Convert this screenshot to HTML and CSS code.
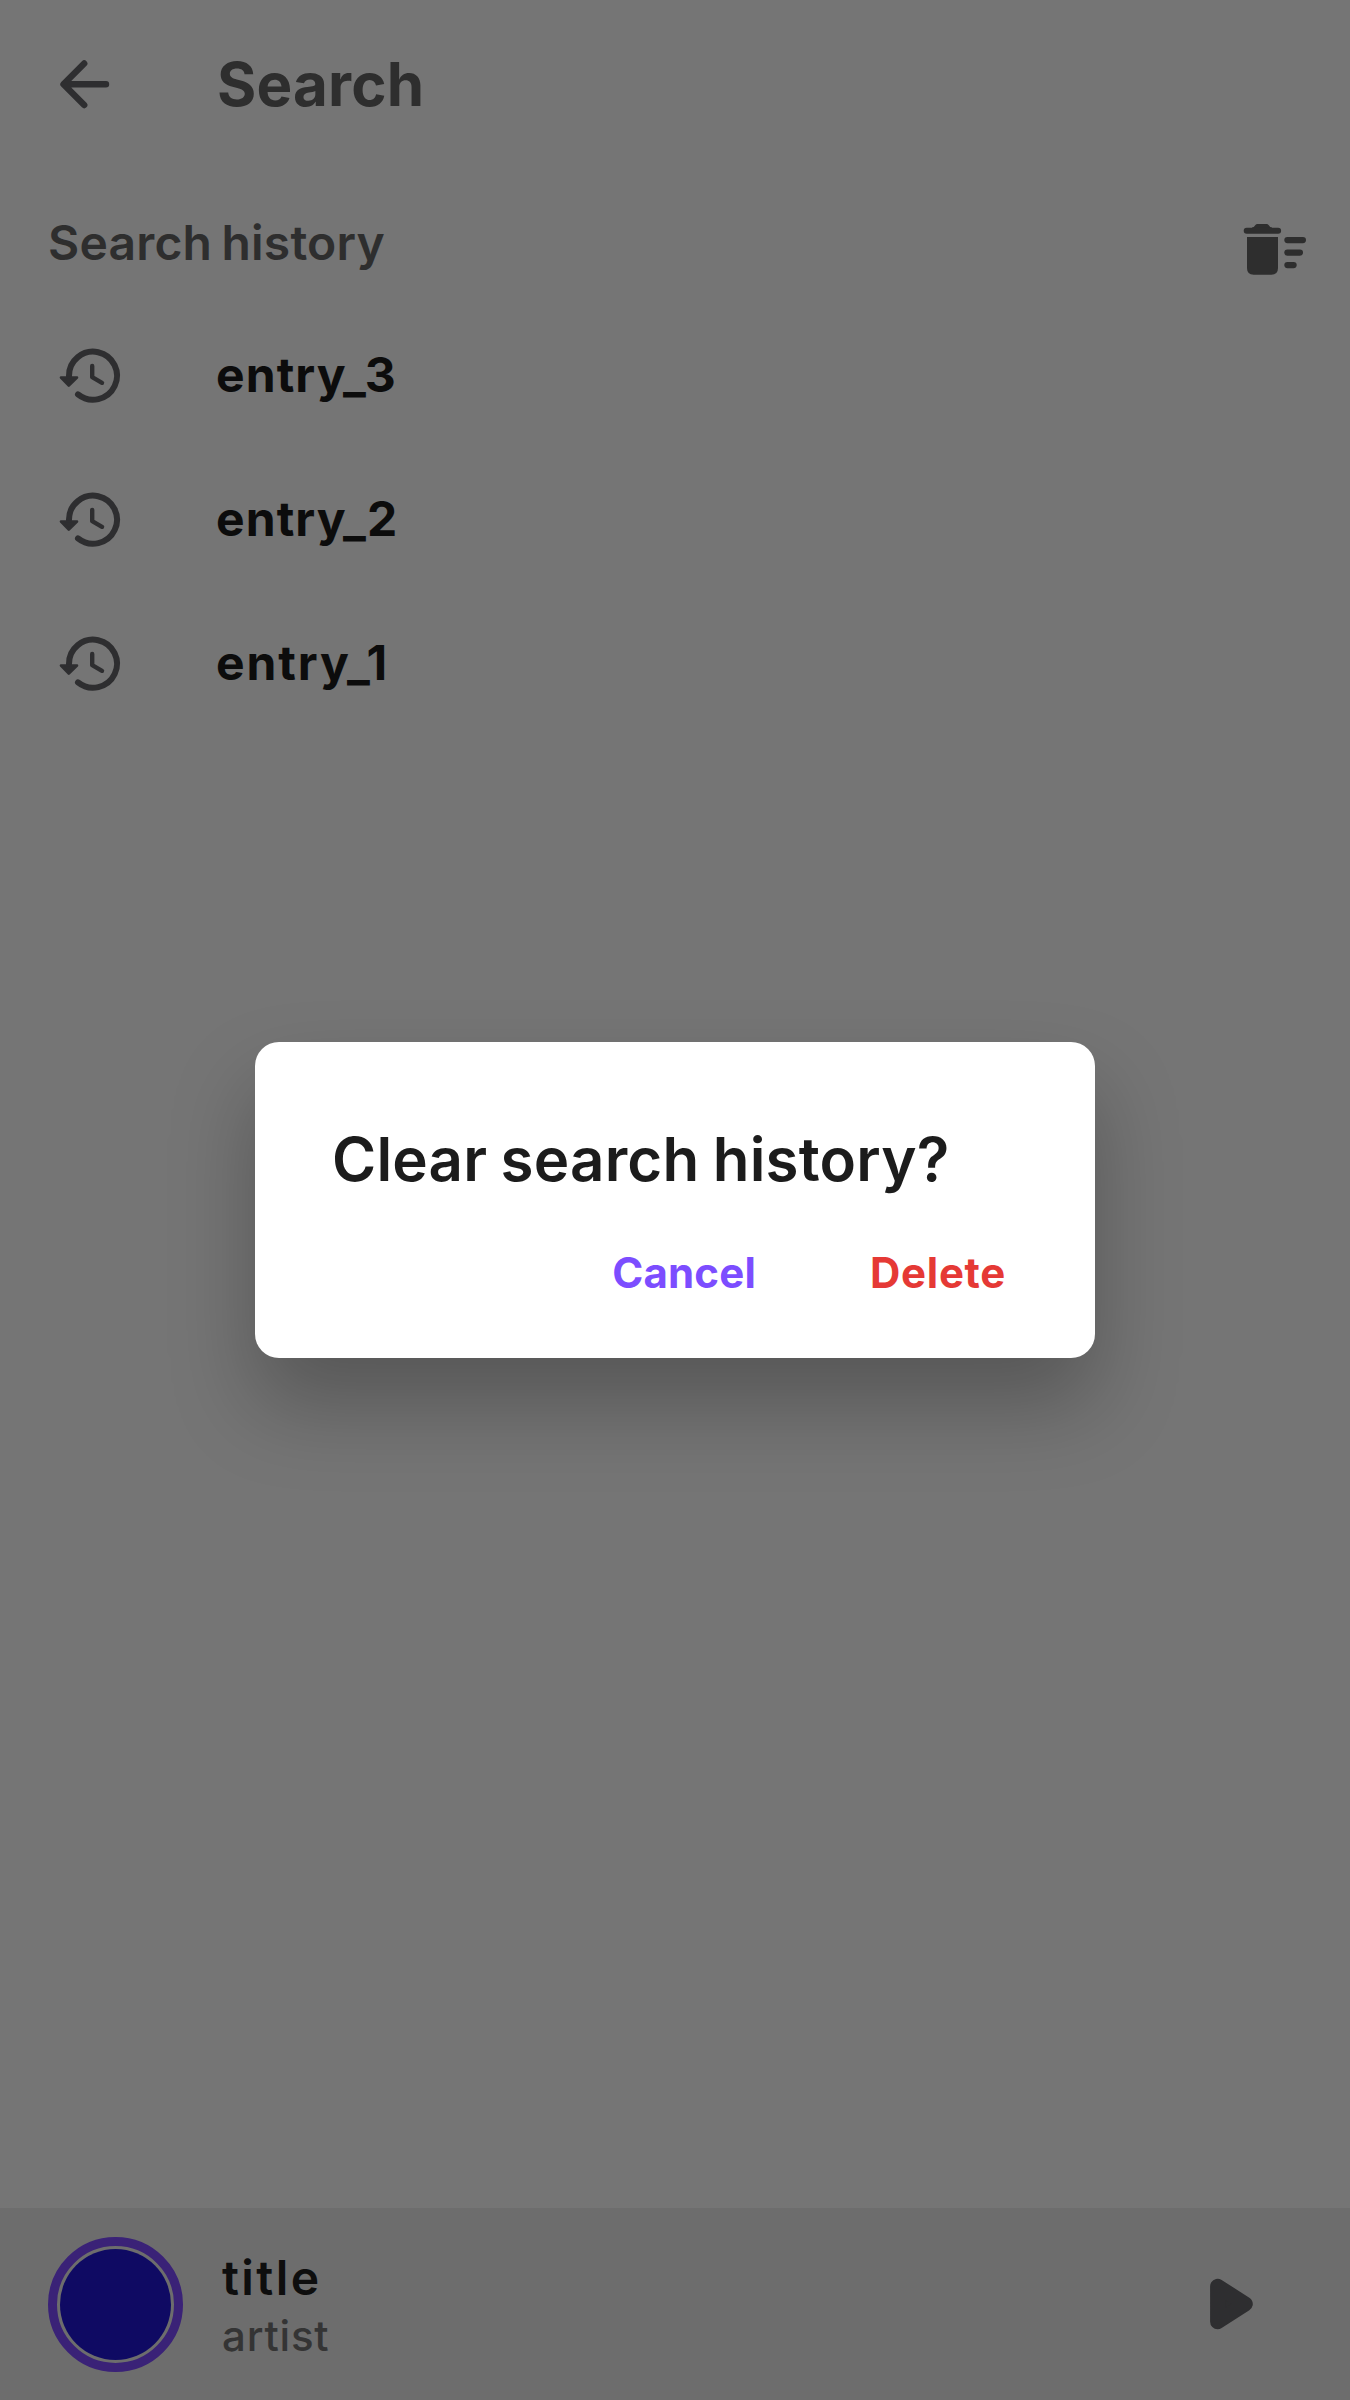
FILE: index.html
```
<!DOCTYPE html>
<html lang="en">
<head>
<meta charset="utf-8">
<title>Search</title>
<link rel="stylesheet" href="styles.css">
</head>
<body>
<svg width="0" height="0" class="defs">
  <symbol id="history" viewBox="0 0 72 72">
    <path d="M15 37a24 24 0 1 1 9 18.4" fill="none" stroke="currentColor" stroke-width="6" stroke-linecap="round"/>
    <path d="M7 38.5h16l-8.2 8z" fill="currentColor" stroke="currentColor" stroke-width="2.6" stroke-linejoin="round"/>
    <path d="M38.2 27v11.2l9.8 5.6" fill="none" stroke="currentColor" stroke-width="4.4" stroke-linecap="round" stroke-linejoin="round"/>
  </symbol>
</svg>
<div class="screen">
  <header class="app-bar">
    <svg class="icon" viewBox="0 0 72 72"><path d="M58 36.3H16M36.2 15.5 15.5 36.3l20.7 20.8" fill="none" stroke="currentColor" stroke-width="6.4" stroke-linecap="round" stroke-linejoin="round"/></svg>
    <h1 class="app-title">Search</h1>
  </header>
  <section class="section-head">
    <h2 class="section-title">Search history</h2>
    <svg class="icon clear" viewBox="0 0 72 72" fill="currentColor">
      <path d="M8 16.6c1.4 0 2.2-.9 3-2 .9-1.3 1.7-1.6 3-1.6h8c1.3 0 2.1.3 3 1.6.8 1.100 1.600 2 3 2v2H8z"/>
      <rect x="-.3" y="16.800" width="37.400" height="6" rx="3"/>
      <path d="M3 26h31v31q0 6.700-6.700 6.700H9.700Q3 63.700 3 57z"/>
      <rect x="40.300" y="26" width="21.700" height="6.200" rx="3.100"/>
      <rect x="40.300" y="38.500" width="18.700" height="6.200" rx="3.100"/>
      <rect x="40.300" y="51" width="12.400" height="6.200" rx="3.100"/>
    </svg>
  </section>
  <ul class="entries">
    <li class="entry"><svg class="icon"><use href="#history"/></svg><span>entry_3</span></li>
    <li class="entry"><svg class="icon"><use href="#history"/></svg><span>entry_2</span></li>
    <li class="entry"><svg class="icon"><use href="#history"/></svg><span class="last">entry_1</span></li>
  </ul>
  <footer class="player">
    <div class="art"><div class="disc"></div></div>
    <div class="track">
      <div class="track-title">title</div>
      <div class="track-artist">artist</div>
    </div>
    <svg class="icon play" viewBox="0 0 72 72"><path d="M21.600 18.300v35.400L49.300 36z" fill="currentColor" stroke="currentColor" stroke-width="15" stroke-linejoin="round"/></svg>
  </footer>
  <div class="overlay">
    <div class="dialog" role="dialog">
      <h2 class="dialog-title">Clear search history?</h2>
      <div class="actions">
        <button class="btn cancel">Cancel</button>
        <button class="btn delete">Delete</button>
      </div>
    </div>
  </div>
</div>
</body>
</html>
```

FILE: styles.css
```
* { box-sizing: border-box; margin: 0; padding: 0; }

body {
  background: #757575;
  color: #2e2e2e;
  font-family: Inter, "Open Sans", sans-serif;
}

.defs { display: block; }

.screen {
  position: relative;
  display: flex;
  flex-direction: column;
  width: 1350px;
  height: 2400px;
  overflow: hidden;
}

.icon { flex: none; width: 72px; height: 72px; color: #2e2e30; overflow: visible; }

.app-bar {
  display: flex;
  align-items: center;
  gap: 97px;
  height: 168px;
  padding-left: 48px;
}

.app-title {
  font-size: 60px;
  font-weight: 650;
  line-height: 72px;
  letter-spacing: 0.2px;
}

.section-head {
  display: flex;
  justify-content: space-between;
  height: 134px;
  padding: 43px 34px 0 48px;
}

.section-title {
  padding-top: 3px;
  font-size: 48px;
  font-weight: 600;
  line-height: 58px;
  letter-spacing: 0.2px;
  word-spacing: -3px;
}

.clear { color: #2e2e2e; }

.entries { flex: 1; list-style: none; }

.entry {
  display: flex;
  align-items: center;
  gap: 90px;
  height: 144px;
  padding: 1px 0 0 54px;
  color: #0c0c0c;
  font-size: 48px;
  font-weight: 680;
  letter-spacing: 1.1px;
}

.last { letter-spacing: 1.9px; }

.player {
  display: flex;
  align-items: center;
  height: 192px;
  padding: 0 84px 0 48px;
  background: #6d6d6d;
}

.art {
  display: flex;
  align-items: center;
  justify-content: center;
  width: 135px;
  height: 135px;
  border: 9px solid #3a2277;
  border-radius: 50%;
}

.disc {
  width: 111px;
  height: 111px;
  border-radius: 50%;
  background: #0f0a63;
}

.track { flex: 1; padding: 3px 0 0 39px; }

.track-title {
  color: #0e0e0e;
  font-size: 48px;
  font-weight: 600;
  line-height: 60px;
  letter-spacing: 2.4px;
}

.track-artist {
  color: #343434;
  font-size: 42px;
  font-weight: 450;
  line-height: 56px;
  letter-spacing: 0.8px;
}

.play { margin-right: -2px; }

.overlay {
  position: absolute;
  inset: 0;
  display: flex;
  align-items: center;
  justify-content: center;
}

.dialog {
  width: 840px;
  height: 315.4px;
  padding: 76px 89px 0 77px;
  border-radius: 24px;
  background: #fff;
  box-shadow: 0 46px 84px rgba(0, 0, 0, 0.26);
}

.dialog-title {
  color: #1c1c1c;
  font-size: 60px;
  font-weight: 600;
  line-height: 82px;
  letter-spacing: 0.2px;
  word-spacing: -2px;
  white-space: nowrap;
}

.actions {
  display: flex;
  justify-content: flex-end;
  gap: 114px;
  padding-top: 48px;
}

.btn {
  border: 0;
  background: none;
  font: 700 42px/50px Inter, "Open Sans", sans-serif;
}

.cancel { color: #7c4dff; letter-spacing: 0.2px; }
.delete { color: #e53935; letter-spacing: 0.7px; }
```
